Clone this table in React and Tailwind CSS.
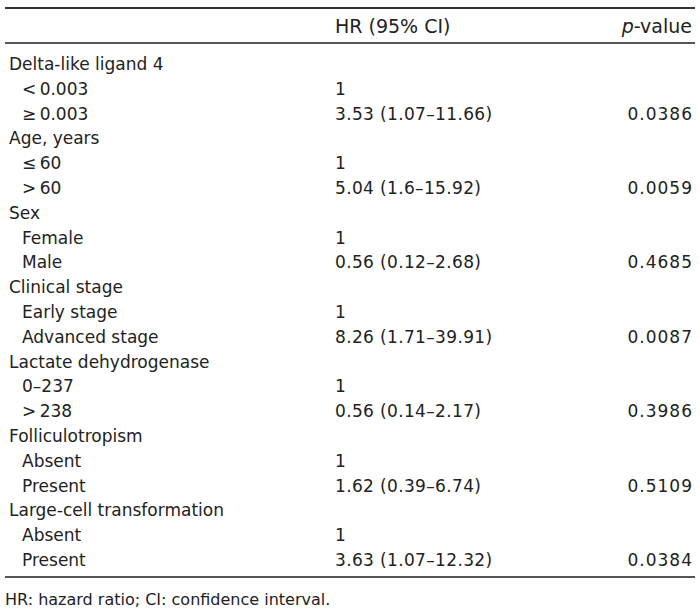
import React from "react";

const rows = [
  { cat: "Delta-like ligand 4" },
  { sub: "<\u20090.003", hr: "1" },
  { sub: "\u2265\u20090.003", hr: "3.53 (1.07\u201311.66)", p: "0.0386" },
  { cat: "Age, years" },
  { sub: "\u2264\u200960", hr: "1" },
  { sub: ">\u200960", hr: "5.04 (1.6\u201315.92)", p: "0.0059" },
  { cat: "Sex" },
  { sub: "Female", hr: "1" },
  { sub: "Male", hr: "0.56 (0.12\u20132.68)", p: "0.4685" },
  { cat: "Clinical stage" },
  { sub: "Early stage", hr: "1" },
  { sub: "Advanced stage", hr: "8.26 (1.71\u201339.91)", p: "0.0087" },
  { cat: "Lactate dehydrogenase" },
  { sub: "0\u2013237", hr: "1" },
  { sub: ">\u2009238", hr: "0.56 (0.14\u20132.17)", p: "0.3986" },
  { cat: "Folliculotropism" },
  { sub: "Absent", hr: "1" },
  { sub: "Present", hr: "1.62 (0.39\u20136.74)", p: "0.5109" },
  { cat: "Large-cell transformation" },
  { sub: "Absent", hr: "1" },
  { sub: "Present", hr: "3.63 (1.07\u201312.32)", p: "0.0384" },
];

export default function App() {
  return (
    <div
      className="w-[700px] h-[609px] bg-white text-[#222] text-[17px] pt-[7px]"
      style={{ fontFamily: '"DejaVu Sans", Verdana, sans-serif' }}
    >
      <div className="mx-[5px] border-t-2 border-[#333]">
        <div className="grid grid-cols-[330px_1fr_auto] h-[35px] items-center border-b-2 border-[#555] text-[19px] pt-[1px]">
          <div />
          <div>HR (95% CI)</div>
          <div className="pr-[3px]">
            <span className="italic">p</span>-value
          </div>
        </div>
        <div className="pt-[8px] pb-[3px] border-b-2 border-[#555]">
          {rows.map((r, i) => (
            <div key={i} className="grid grid-cols-[330px_1fr_auto] h-[24.8px] items-center">
              <div className={r.cat ? "pl-[4px]" : "pl-[17px]"}>{r.cat || r.sub}</div>
              <div className="tracking-[0.35px]">{r.hr || ""}</div>
              <div className="pr-[3px] tracking-[1px] -mr-[1px]">{r.p || ""}</div>
            </div>
          ))}
        </div>
        <div className="pl-[0px] pt-[10px] text-[16px]">HR: hazard ratio; CI: confidence interval.</div>
      </div>
    </div>
  );
}
